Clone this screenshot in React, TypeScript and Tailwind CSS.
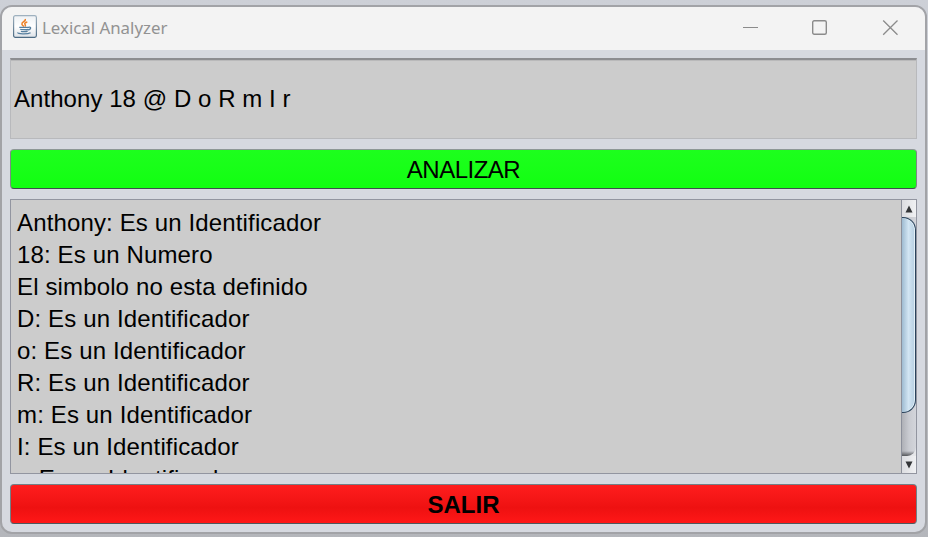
const results = [
  'Anthony: Es un Identificador',
  '18: Es un Numero',
  'El simbolo no esta definido',
  'D: Es un Identificador',
  'o: Es un Identificador',
  'R: Es un Identificador',
  'm: Es un Identificador',
  'I: Es un Identificador',
  'r: Es un Identificador',
];

function JavaIcon() {
  return (
    <svg className="block h-6 w-6" viewBox="0 0 24 24" fill="none">
      <defs>
        <linearGradient id="tile" x1="0" y1="0" x2="0" y2="1">
          <stop offset="0" stopColor="#eef1f4" />
          <stop offset="0.5" stopColor="#ffffff" />
          <stop offset="1" stopColor="#dde2e7" />
        </linearGradient>
        <linearGradient id="rim" x1="0" y1="0" x2="0" y2="1">
          <stop offset="0" stopColor="#9fb1bf" />
          <stop offset="1" stopColor="#4d6b84" />
        </linearGradient>
      </defs>
      <rect x="0.6" y="0.6" width="22.8" height="21.800" rx="1.8" fill="url(#tile)" stroke="url(#rim)" strokeWidth="1.2" />
      <path d="M12.200 4c1.200 2.200-3.700 3-3.300 5.100.2 1.100 1.500 1.500 1.900 2.500M14.300 6.900c-2.200.5-3.200 1.500-2.200 2.700.6.700.4 1.300-.1 1.900" stroke="#ee8127" strokeWidth="1.500" />
      <path d="M6.300 12.300h9.600M7.200 14.200c.4.600 7 .7 8.200.1M8 16.200c1 .6 5.400.6 6.600 0M15.800 12.200c2.500-.5 2.500 2.100-.5 2.800M5.200 17.500c-1.800 1.600 9.500 1.900 12.400.2" stroke="#567f9f" strokeWidth="1.300" />
    </svg>
  );
}

function TitleBar() {
  return (
    <header className="flex h-[43px] shrink-0 items-center bg-[#f3f3f3] pl-[11px] font-['Noto_Sans','Open_Sans',sans-serif]">
      <div className="-mt-[3px]">
        <JavaIcon />
      </div>
      <span className="-mt-px ml-[5px] w-[126px] text-[17px] leading-6 whitespace-nowrap text-[#929292]">
        <span className="inline-block origin-left scale-x-[0.99]">Lexical Analyzer</span>
      </span>
      <div className="-mt-[2px] mr-[27px] ml-auto flex items-center gap-[54px] text-[#8b8b8b]">
        <svg className="block h-4 w-4" viewBox="0 0 16 16" fill="none">
          <path d="M1 7.500h15" stroke="currentColor" />
        </svg>
        <svg className="block h-4 w-4" viewBox="0 0 16 16" fill="none">
          <rect x="0.700" y="0.700" width="13.600" height="13.600" rx="1.500" stroke="currentColor" strokeWidth="1.400" />
        </svg>
        <svg className="block h-4 w-4" viewBox="0 0 16 16" fill="none">
          <path d="M1.200 0.500l14.300 14.300M15.500 0.500L1.200 14.800" stroke="currentColor" strokeWidth="1.300" />
        </svg>
      </div>
    </header>
  );
}

function ScrollBar() {
  return (
    <div className="flex w-[15px] shrink-0 flex-col border-l border-[#8c909b] bg-gradient-to-r from-[#aeb0b6] via-[#c9cbd1] to-[#d3d5db]">
      <div className="flex h-[17px] items-center justify-center bg-gradient-to-r from-[#dcdde1] to-[#f0f1f3]">
        <svg className="block h-2 w-2" viewBox="0 0 8 8">
          <path d="M4 0.500L7.500 7.500H0.500z" fill="#343639" />
        </svg>
      </div>
      <div className="flex flex-1 flex-col bg-[#e6e7ea]">
        <div className="flex flex-1 flex-col overflow-hidden rounded-br-[9px] bg-gradient-to-r from-[#aeb0b6] via-[#c9cbd1] to-[#d3d5db]">
          <div className="h-[196px] rounded-r-[13px] border border-l-0 border-[#2a435c] bg-gradient-to-r from-[#9ebbd1] via-[#d2e5f3] to-[#b5cee1] shadow-[inset_-1px_0_0_#e3f0f8]" />
          <div className="mt-auto h-[5px] bg-gradient-to-b from-transparent to-[#55575b]" />
        </div>
      </div>
      <div className="flex h-[17px] items-center justify-center bg-gradient-to-r from-[#dcdde1] to-[#f0f1f3]">
        <svg className="block h-2 w-2" viewBox="0 0 8 8">
          <path d="M4 7.500L7.500 0.500H0.500z" fill="#343639" />
        </svg>
      </div>
    </div>
  );
}

export default function App() {
  return (
    <div className="h-[537px] w-[928px] overflow-hidden bg-gradient-to-b from-[#cdd0d7] to-[#b4b6bb] pt-[5px] font-['Liberation_Sans',Arial,sans-serif] text-2xl text-black [font-variant-ligatures:none]">
      <div className="flex h-[529px] w-[927px] flex-col overflow-hidden rounded-[12px] border-2 border-[#a2a3a7] bg-[#d6d9e0]">
        <TitleBar />
        <main className="flex flex-1 flex-col px-2 pt-2">
          <div className="flex h-[81px] w-[907px] items-center border border-t-2 border-[#b8b9bc] border-t-[#8c8d91] bg-[#cccccc] pl-[3px] tracking-[0.06px] shadow-[inset_0_1px_0_#b9b9ba]">
            Anthony 18 @ D o R m I r
          </div>
          <button className="mt-[10px] flex h-10 w-[907px] items-center justify-center rounded-[4px] border border-[#7d8a84] border-t-[#8d9796] border-b-[#3f4f4c] bg-gradient-to-b from-[#1dff1d] to-[#11ff11] pt-[2px] tracking-[-0.5px]">
            ANALIZAR
          </button>
          <div className="mt-[10px] flex h-[275px] w-[907px] overflow-hidden border border-[#9295a0] bg-[#cccccc]">
            <div className="flex-1 overflow-hidden pt-[7px] pl-[6px] leading-8 tracking-[0.14px]">
              {results.map((line) => (
                <div key={line}>{line}</div>
              ))}
            </div>
            <ScrollBar />
          </div>
          <button className="mt-[10px] flex h-10 w-[907px] items-center justify-center rounded-[4px] border border-[#737f86] border-b-[#4d585e] bg-gradient-to-b from-[#ff1d1d] via-[#ee1111] via-60% to-[#ff1717] pt-[2px] font-bold">
            SALIR
          </button>
        </main>
      </div>
    </div>
  );
}
